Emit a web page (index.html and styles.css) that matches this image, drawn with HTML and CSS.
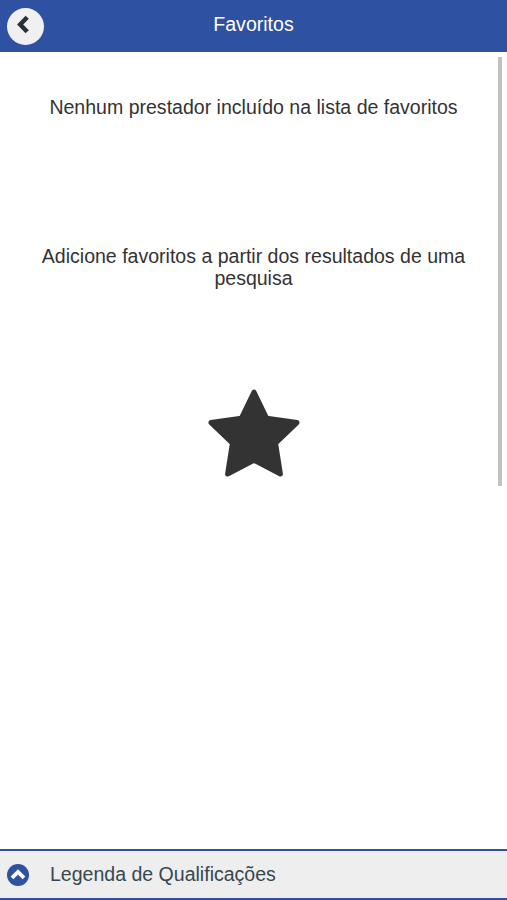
FILE: index.html
```html
<!DOCTYPE html>
<html lang="pt-BR">
<head>
  <meta charset="utf-8"/>
  <title>Favoritos</title>
  <link rel="stylesheet" href="styles.css">
</head>
<body>
  <header class="header">
    <button class="back-button" aria-label="Voltar">
      <svg width="37" height="37" viewBox="0 0 37 37">
        <path d="M20.2 9.2L13.2 16.5L20.2 23.8" fill="none" stroke="#263238" stroke-width="4.5"/>
      </svg>
    </button>
    <h1 class="title">Favoritos</h1>
  </header>

  <main class="content">
    <div class="messages">
      <p class="message">Nenhum prestador incluído na lista de favoritos</p>
      <p class="message hint">Adicione favoritos a partir dos resultados de uma pesquisa</p>
      <svg class="star" width="92" height="88" viewBox="0 0 92 88">
        <path d="M46 3L58.7 29.3L89 33.6L67.6 54.3L72.4 85L46 71.3L19.6 85L24.4 54.3L3 33.6L33.3 29.3Z"/>
      </svg>
    </div>
    <div class="scrollbar"></div>
  </main>

  <footer class="legend">
    <svg class="legend-icon" width="22" height="22" viewBox="0 0 22 22">
      <circle cx="11" cy="11" r="11"/>
      <path d="M5 13.8L11 8L17 13.8"/>
    </svg>
    <span>Legenda de Qualificações</span>
  </footer>
</body>
</html>
```

FILE: styles.css
```css
* {
  box-sizing: border-box;
}
body {
  display: flex;
  flex-direction: column;
  height: 100vh;
  margin: 0;
  overflow: hidden;
  background: #fff;
  color: #333;
  font-family: "Liberation Sans", Arial, sans-serif;
  font-size: 19.55px;
}
.header {
  display: grid;
  grid-template-columns: 37px 1fr 37px;
  flex: none;
  height: 52px;
  padding: 0 7px;
  background: #2f51a1;
}
.back-button {
  width: 37px;
  height: 37px;
  margin-top: 8px;
  padding: 0;
  border: none;
  border-radius: 50%;
  background: #f0f0f0;
  cursor: pointer;
}
.back-button svg {
  display: block;
}
.title {
  margin: 0;
  color: #fff;
  font-size: 19.55px;
  font-weight: normal;
  line-height: 49px;
  text-align: center;
}
.content {
  display: flex;
  flex: 1;
}
.messages {
  flex: 1;
  padding: 44px 29px 0 38px;
  text-align: center;
}
.message {
  margin: 0;
  line-height: 22px;
}
.hint {
  margin: 127px 0 100px;
}
.star {
  display: block;
  margin: 0 auto;
  fill: #333;
  stroke: #333;
  stroke-width: 5;
  stroke-linejoin: round;
}
.scrollbar {
  width: 4px;
  height: 429px;
  margin: 5px 5px 0 0;
  background: #c1c1c1;
}
.legend {
  display: flex;
  align-items: center;
  flex: none;
  gap: 21px;
  height: 51px;
  padding-left: 7px;
  border-top: 2px solid #2f51a1;
  border-bottom: 2px solid #2f51a1;
  background: #eee;
  color: #37474f;
}
.legend-icon circle {
  fill: #2f51a1;
}
.legend-icon path {
  fill: none;
  stroke: #fff;
  stroke-width: 3.8;
}
```
